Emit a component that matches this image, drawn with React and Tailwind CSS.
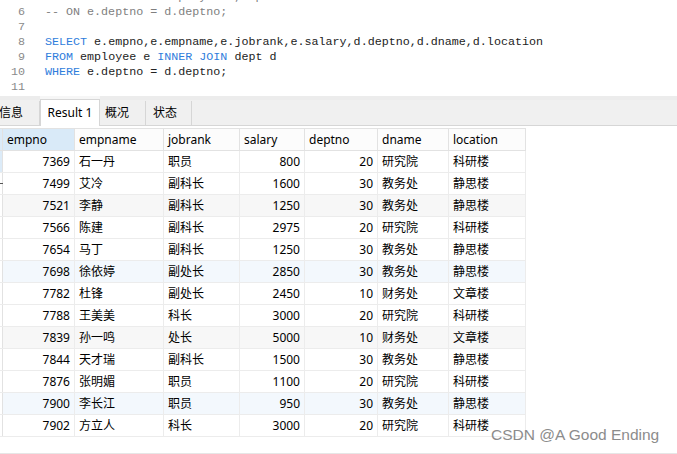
import React from 'react';

const rows = [
  ['7369', '石一丹', '职员', '800', '20', '研究院', '科研楼'],
  ['7499', '艾冷', '副科长', '1600', '30', '教务处', '静思楼'],
  ['7521', '李静', '副科长', '1250', '30', '教务处', '静思楼'],
  ['7566', '陈建', '副科长', '2975', '20', '研究院', '科研楼'],
  ['7654', '马丁', '副科长', '1250', '30', '教务处', '静思楼'],
  ['7698', '徐依婷', '副处长', '2850', '30', '教务处', '静思楼'],
  ['7782', '杜锋', '副处长', '2450', '10', '财务处', '文章楼'],
  ['7788', '王美美', '科长', '3000', '20', '研究院', '科研楼'],
  ['7839', '孙一鸣', '处长', '5000', '10', '财务处', '文章楼'],
  ['7844', '天才瑞', '副科长', '1500', '30', '教务处', '静思楼'],
  ['7876', '张明媚', '职员', '1100', '20', '研究院', '科研楼'],
  ['7900', '李长江', '职员', '950', '30', '教务处', '静思楼'],
  ['7902', '方立人', '科长', '3000', '20', '研究院', '科研楼'],
];

const headers = ['empno', 'empname', 'jobrank', 'salary', 'deptno', 'dname', 'location'];
const widths = ['w-[72px]', 'w-[89px]', 'w-[76px]', 'w-[65px]', 'w-[73px]', 'w-[71px]', 'w-[77px]'];
const numeric = [true, false, false, true, true, false, false];

// row tint, as in the grid (light grey / light blue stripes)
const rowBg = (i) => {
  if (i === 2 || i === 8) return 'bg-[#f7f7f7]';
  if (i === 5 || i === 11) return 'bg-[#f3f8fd]';
  return 'bg-white';
};

const K = ({ children }) => <span className="text-[#2f7ddc]">{children}</span>;

function Editor() {
  const lines = [
    [5, <span className="text-[#808080]">-- SELECT * FROM employee e,dept d</span>],
    [6, <span className="text-[#808080]">-- ON e.deptno = d.deptno;</span>],
    [7, ''],
    [8, <><K>SELECT</K> e.empno,e.empname,e.jobrank,e.salary,d.deptno,d.dname,d.location</>],
    [9, <><K>FROM</K> employee e <K>INNER JOIN</K> dept d</>],
    [10, <><K>WHERE</K> e.deptno = d.deptno;</>],
    [11, ''],
  ];
  return (
    <div className="h-[96px] overflow-hidden bg-white">
      <div className="mt-[-10px] font-['Liberation_Mono',monospace] text-[11.7px] text-[#222]">
        {lines.map(([n, code]) => (
          <div key={n} className="flex h-[15px] items-center leading-[15px]">
            <div className="w-[25px] text-right text-[#8a8a8a]">{n}</div>
            <div className="ml-[20px] whitespace-pre">{code}</div>
          </div>
        ))}
      </div>
    </div>
  );
}

function Tabs() {
  return (
    <div className="flex h-[30px] flex-col">
      <div className="flex h-[4px] bg-[#ececec]">
        <div className="ml-[40px] w-[60px] bg-[#f6f6f6]" />
      </div>
      <div className="flex h-[26px] items-end border-b border-[#d6d6d6] bg-[#f0f0f0] text-[12px] text-black">
        <div className="flex h-[24px] w-[41px] items-center border-r border-[#d6d6d6] -ml-[1px]">信息</div>
        <div className="relative -mb-[1px] flex h-[27px] w-[60px] items-center justify-center border-x border-t border-[#d6d6d6] bg-white">Result 1</div>
        <div className="flex h-[24px] w-[46px] items-center border-r border-[#d6d6d6] pl-[5px]">概况</div>
        <div className="flex h-[24px] w-[46px] items-center border-r border-[#d6d6d6] pl-[7px]">状态</div>
      </div>
    </div>
  );
}

function Grid() {
  return (
    <div className="mt-[2px] flex w-fit flex-col text-[12px] text-black">
      <div className="flex h-[23px] border-t border-b border-[#e2e2e2]">
        <div className="w-[3px] bg-[#dcebf8] border-r border-[#e2e2e2]" />
        {headers.map((h, c) => (
          <div
            key={h}
            className={`${widths[c]} flex items-center border-r border-[#e2e2e2] pl-[4px] ${c === 0 ? 'bg-[#d9eaf8]' : 'bg-[#fcfcfc]'}`}
          >
            {h}
          </div>
        ))}
      </div>
      {rows.map((r, i) => (
        <div key={r[0]} className={`flex h-[22px] border-b border-[#ececec] ${rowBg(i)}`}>
          <div className={`relative w-[3px] border-r border-[#e2e2e2] ${i === 0 ? 'bg-[#dcebf8]' : 'bg-white'}`}>
            {i === 1 && <div className="absolute left-0 top-[10px] h-[1px] w-[3px] bg-[#555]" />}
          </div>
          {r.map((v, c) => (
            <div
              key={c}
              className={`${widths[c]} flex items-center border-r border-[#ececec] px-[4px] ${numeric[c] ? 'justify-end' : 'justify-start'}`}
            >
              {v}
            </div>
          ))}
        </div>
      ))}
    </div>
  );
}

export default function App() {
  return (
    <div className="relative h-[454px] w-[677px] overflow-hidden bg-white font-['Noto_Sans','Noto_Sans_CJK_SC',sans-serif]">
      <Editor />
      <Tabs />
      <Grid />
      <div className="mt-[16px] h-[1px] bg-[#e6e6e6]" />
      <div className="absolute left-[491px] top-[423px] font-['Liberation_Sans',sans-serif] text-[15.5px] text-[#8c8c8c]">
        CSDN @A Good Ending
      </div>
    </div>
  );
}
